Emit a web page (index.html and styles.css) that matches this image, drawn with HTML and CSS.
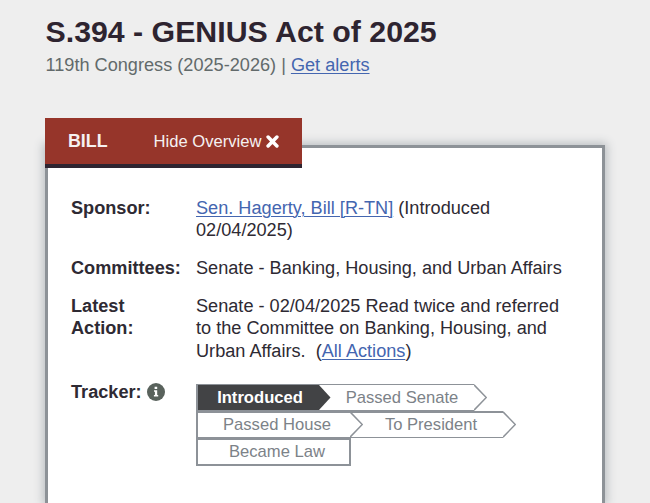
FILE: index.html
```
<!DOCTYPE html>
<html lang="en">
<head>
<meta charset="utf-8">
<title>S.394 - GENIUS Act of 2025</title>
<link rel="stylesheet" href="styles.css">
</head>
<body>
<header class="heading">
  <h1>S.394 - GENIUS Act of 2025</h1>
  <p class="congress">119th Congress (2025-2026) | <a href="#">Get alerts</a></p>
</header>
<main class="overview">
  <div class="tab">
    <strong class="tab-title">BILL</strong>
    <span class="tab-toggle">Hide Overview</span>
    <svg class="close" viewBox="0 0 13 13"><path d="M2.1 2.1 10.9 10.9M10.9 2.1 2.1 10.9"/></svg>
  </div>
  <dl class="details">
    <dt>Sponsor:</dt>
    <dd><a href="#">Sen. Hagerty, Bill [R-TN]</a> (Introduced<br>02/04/2025)</dd>
    <dt>Committees:</dt>
    <dd>Senate - Banking, Housing, and Urban Affairs</dd>
    <dt>Latest<br>Action:</dt>
    <dd>Senate - 02/04/2025 Read twice and referred<br>to the Committee on Banking, Housing, and<br>Urban Affairs.&nbsp; (<a href="#">All Actions</a>)</dd>
    <dt class="tracker-label">Tracker:
      <svg class="info" viewBox="0 0 18 18"><circle cx="9" cy="9" r="9"/><path d="M7.6 3.8h2.6v2.3H7.6zM7 7.2h3.2v4.7h1v1.6H6.9v-1.6h1V8.8H7z"/></svg>
    </dt>
    <dd class="tracker">
      <div class="row">
        <span class="step current">Introduced</span>
        <svg class="arrow filled" viewBox="0 0 13 27"><path d="M0 1 11.5 13.5 0 26z"/></svg>
        <span class="step senate">Passed Senate</span>
        <svg class="arrow" viewBox="0 0 13 27"><path d="M0 .8 12.3 13.5 0 26.2"/></svg>
      </div>
      <div class="row">
        <span class="step house">Passed House</span>
        <svg class="arrow" viewBox="0 0 13 27"><path d="M0 .8 12.3 13.5 0 26.2"/></svg>
        <span class="step president">To President</span>
        <svg class="arrow" viewBox="0 0 13 27"><path d="M0 .8 12.3 13.5 0 26.2"/></svg>
      </div>
      <div class="row">
        <span class="step law">Became Law</span>
      </div>
    </dd>
  </dl>
</main>
</body>
</html>
```
FILE: styles.css
```
* { box-sizing: border-box; }
body {
  margin: 0;
  height: 503px;
  overflow: hidden;
  background: #eee;
  color: #2e2a33;
  font: 18.15px/22.7px "Liberation Sans", Arial, sans-serif;
}
a { color: #4466b0; text-decoration-thickness: 1px; text-underline-offset: 2px; }
.heading { height: 145px; padding: 14px 45px 0 45.5px; }
h1 { margin: 0; font-size: 30.3px; line-height: 36px; color: #2e2430; white-space: nowrap; }
.congress { margin: 4px 0 0; color: #626a6b; }
.overview {
  width: 560px;
  height: 358px;
  margin-left: 45px;
  border: 3px solid #8d9297;
  border-bottom: 0;
  background: #fff;
  box-shadow: 0 0 9px 2px #b9bdc0;
}
.tab {
  display: flex;
  align-items: center;
  width: 257px;
  height: 50px;
  margin: -30px 0 0 -3px;
  padding: 0 0 0 23px;
  border-bottom: 4px solid #2e2430;
  background: #96352a;
  color: #f5f1f1;
  white-space: nowrap;
}
.tab-title { width: 85.5px; font-size: 17.8px; }
.tab-toggle { width: 112.5px; padding-top: 2px; font-size: 16.6px; }
.close { width: 13px; height: 13px; }
.close path { fill: none; stroke: #fff; stroke-width: 3.5; stroke-linecap: round; }
.details {
  display: grid;
  grid-template-columns: 125px 1fr;
  row-gap: 15px;
  margin: 0;
  padding: 28.5px 0 0 23px;
  white-space: nowrap;
}
dt { font-weight: bold; }
dd { margin: 0; }
.tracker-label { display: flex; align-items: center; gap: 5.5px; height: 29px; }
.info { width: 18px; height: 18px; fill: #59625c; }
.info path { fill: #fff; }
.tracker { padding-top: 6.5px; }
.row { display: flex; height: 27px; }
.step {
  height: 27px;
  border: solid #8d9298;
  border-width: 1px 0;
  color: #7c8288;
  font-size: 16.6px;
  line-height: 25px;
  text-align: center;
}
.current { width: 123px; padding-left: 3px; border-left-width: 2px; background: #424345; color: #fff; font-weight: bold; }
.senate { width: 155px; margin-left: -13px; padding-left: 11px; }
.house { width: 154px; padding-left: 6px; border-width: 2px 0 1px 2px; line-height: 24px; }
.president { width: 153px; margin-left: -13px; padding-left: 9px; border-top-width: 2px; line-height: 24px; }
.law { width: 155px; height: 28px; padding-left: 7px; border-width: 2px; line-height: 24px; }
.arrow { position: relative; width: 13px; height: 27px; fill: none; stroke: #8d9298; stroke-width: 1.5; }
.filled { fill: #424345; stroke: none; }
```
